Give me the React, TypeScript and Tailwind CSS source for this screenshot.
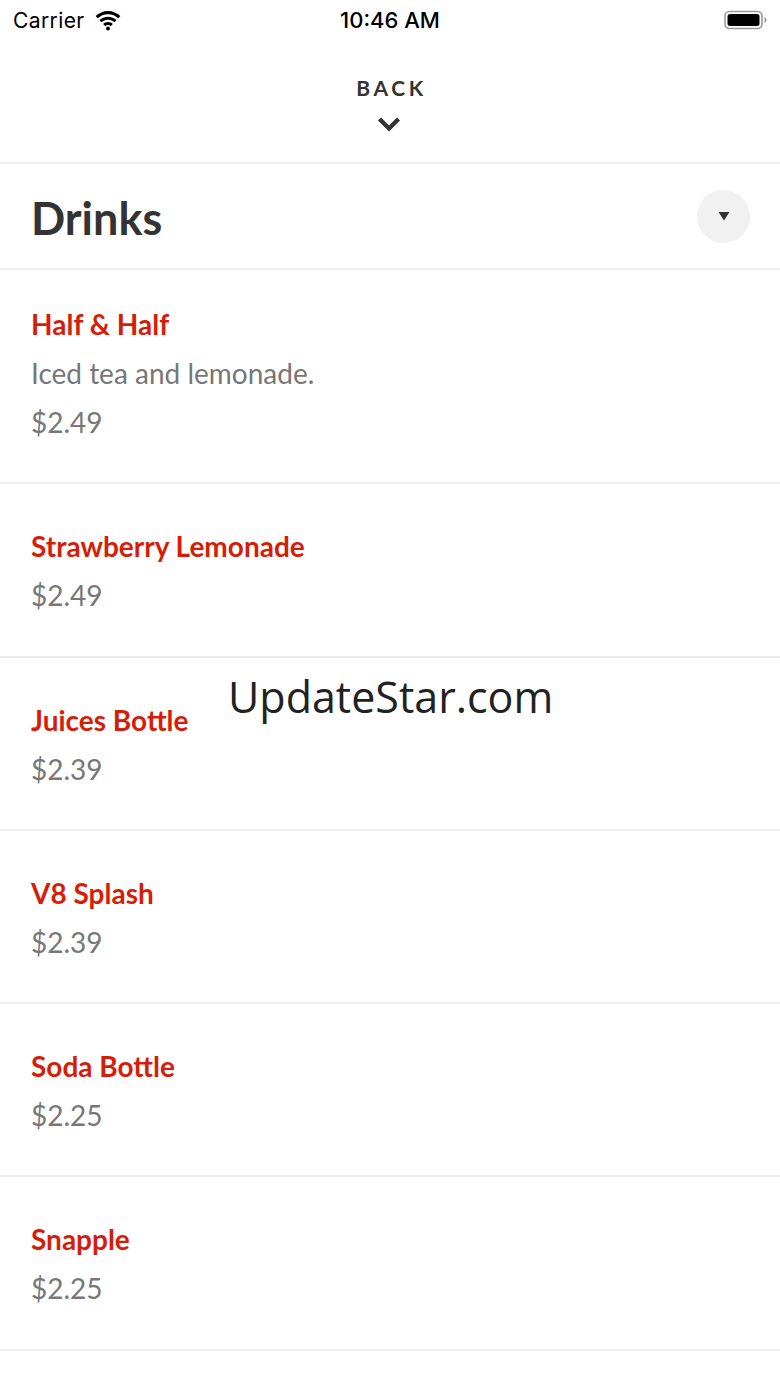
import React from 'react';

type Item = { name: string; desc?: string; price: string };

const items: Item[] = [
  { name: 'Half & Half', desc: 'Iced tea and lemonade.', price: '$2.49' },
  { name: 'Strawberry Lemonade', price: '$2.49' },
  { name: 'Juices Bottle', price: '$2.39' },
  { name: 'V8 Splash', price: '$2.39' },
  { name: 'Soda Bottle', price: '$2.25' },
  { name: 'Snapple', price: '$2.25' },
];

const StatusBar: React.FC = () => (
  <div className="relative flex h-[40px] items-center justify-between px-[13px] font-['Inter',sans-serif] text-black">
    <div className="flex items-center gap-[9px]">
      <span className="text-[21px] leading-none tracking-[0.4px]">Carrier</span>
      <svg width="28" height="21" viewBox="0 0 26 20">
        <path d="M13 4c3.8 0 7.2 1.5 9.8 3.9l2-2.1C21.7 2.9 17.5 1 13 1S4.3 2.9 1.2 5.8l2 2.1C5.8 5.5 9.2 4 13 4z" fill="#000" />
        <path d="M13 9.3c2.4 0 4.5.9 6.2 2.4l2-2.1C19 7.6 16.1 6.4 13 6.4S7 7.6 4.8 9.6l2 2.1c1.7-1.5 3.8-2.4 6.2-2.4z" fill="#000" />
        <path d="M13 14.4c1 0 1.9.4 2.6 1l2-2.1c-1.2-1.1-2.8-1.8-4.6-1.8s-3.4.7-4.6 1.8l2 2.1c.7-.6 1.6-1 2.6-1z" fill="#000" />
        <circle cx="13" cy="17.6" r="1.9" fill="#000" />
      </svg>
    </div>
    <span className="absolute left-1/2 -translate-x-1/2 text-[22px] font-medium leading-none">10:46 AM</span>
    <svg width="44" height="20" viewBox="0 0 44 20" className="mr-[-1px]">
      <rect x="1" y="1.5" width="37" height="17" rx="4.5" fill="none" stroke="#999" strokeWidth="1.6" />
      <rect x="3.5" y="4" width="32" height="12" rx="2.5" fill="#000" />
      <path d="M40.5 7v6c1.2-.4 2-1.6 2-3s-.8-2.6-2-3z" fill="#999" />
    </svg>
  </div>
);

const App: React.FC = () => {
  return (
    <div className="relative min-h-screen bg-white font-['Lato',sans-serif]">
      <StatusBar />

      {/* Back button */}
      <div className="flex h-[124px] flex-col items-center border-b-2 border-[#eeeeee] pt-[37px]">
        <span className="ml-[3px] text-[21px] font-bold leading-none tracking-[3.6px] text-[#333]">BACK</span>
        <svg width="24" height="16" viewBox="0 0 24 16" className="mt-[18px] mr-[2px]">
          <path d="M2.5 3l9.5 9.5 9.5-9.5" fill="none" stroke="#333" strokeWidth="4.4" />
        </svg>
      </div>

      {/* Section header */}
      <div className="flex h-[106px] items-center justify-between border-b-2 border-[#eeeeee] pl-[31px] pr-[30px]">
        <h1 className="mt-[4px] text-[45px] font-bold leading-none text-[#333]">Drinks</h1>
        <button className="flex h-[53px] w-[53px] items-center justify-center rounded-full bg-[#f1f1f1]">
          <svg width="12" height="10" viewBox="0 0 12 10">
            <path d="M0.5 1h11L6 9.5z" fill="#333" />
          </svg>
        </button>
      </div>

      {/* Items */}
      <div>
        {items.map((item, i) => (
          <div
            key={item.name}
            className={`border-b-2 border-[#eeeeee] pl-[31px] pb-[35.3px] ${i === 0 ? 'pt-[30px]' : 'pt-[38px]'}`}
          >
            <div className="text-[28px] font-bold leading-[49px] text-[#d61d08]">{item.name}</div>
            {item.desc && <div className="text-[28px] leading-[49px] text-[#777]">{item.desc}</div>}
            <div className="text-[28px] leading-[49px] text-[#777]">{item.price}</div>
          </div>
        ))}
      </div>

      {/* Watermark */}
      <div className="pointer-events-none absolute left-[228px] top-[668px] font-['Open_Sans',sans-serif] text-[43px] leading-[58px] text-[#222]">
        UpdateStar.com
      </div>
    </div>
  );
};

export default App;
